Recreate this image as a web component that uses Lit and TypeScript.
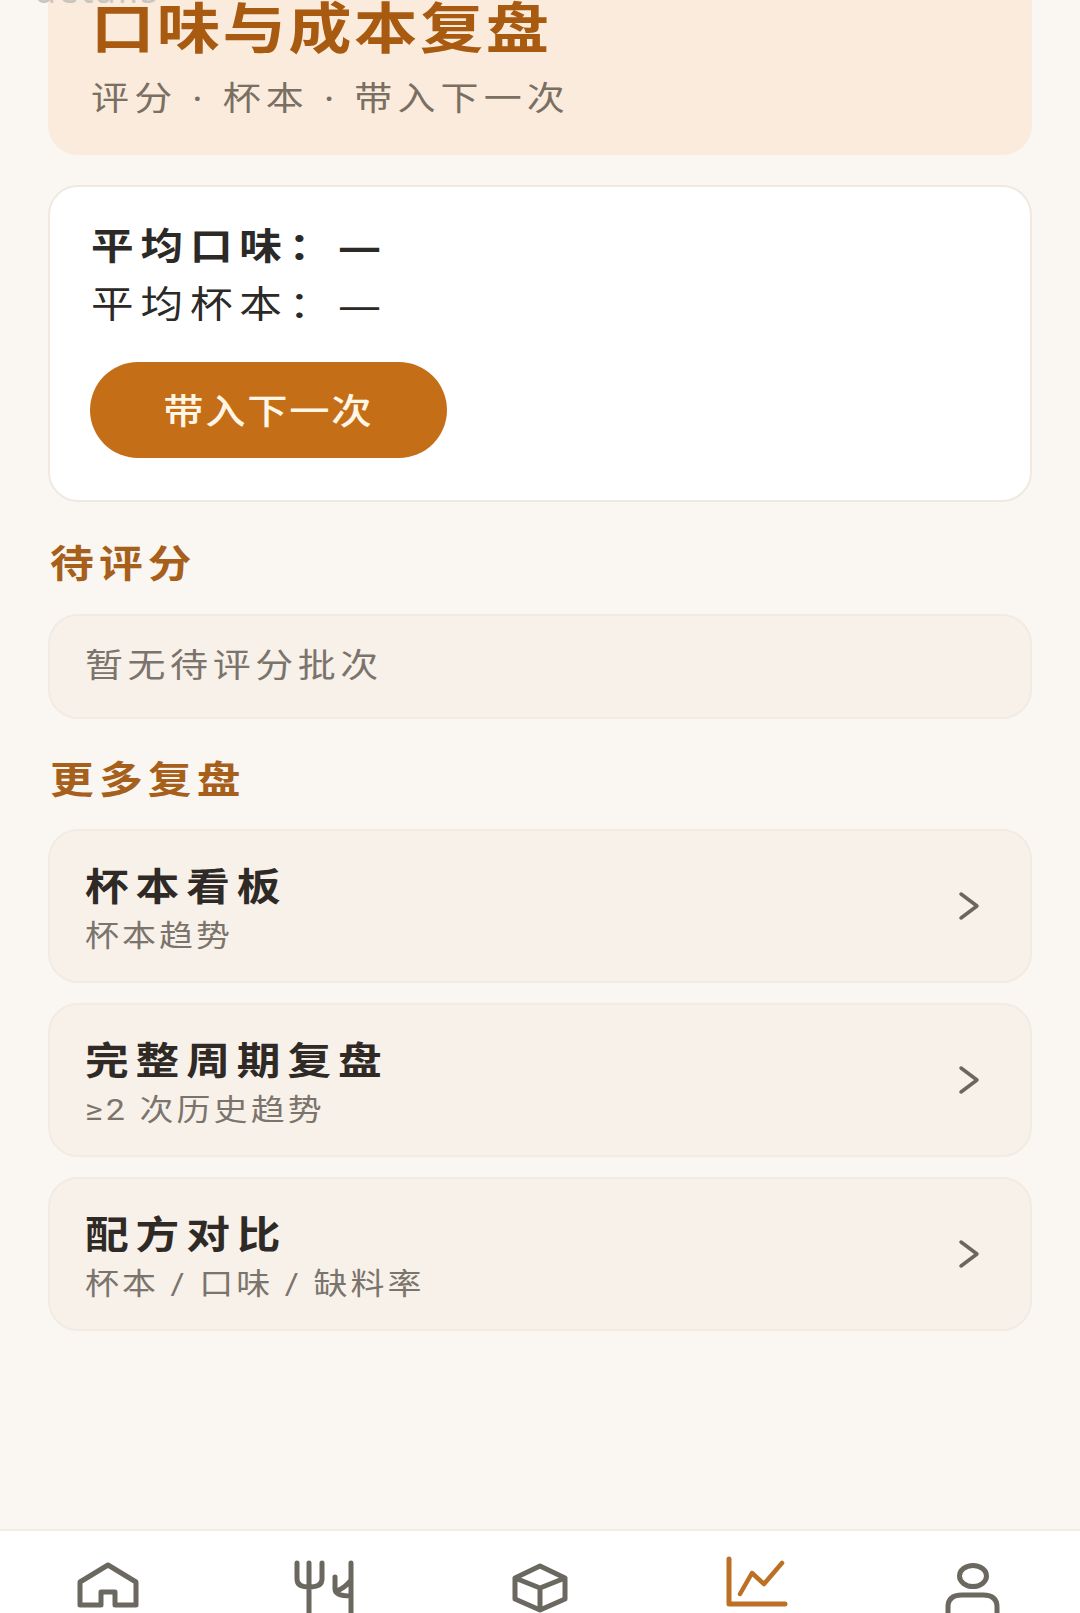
import { LitElement, html, css, svg } from "lit";
import { customElement } from "lit/decorators.js";

const rows = [
  ["杯本看板", "杯本趋势"],
  ["完整周期复盘", "≥2 次历史趋势"],
  ["配方对比", "杯本 / 口味 / 缺料率"],
];

const nav = [
  svg`<path d="M40 24 L68 41 V64 H47 V51 H33 V64 H12 V41 Z"/>`,
  svg`<path d="M13 22 V38 Q13 46 25 46 Q38 46 38 38 V22 M25 22 V74 M67 22 V74 M51 36 V48 Q51 55 67 55 M67 39 Q60 48 52 50"/>`,
  svg`<path d="M40 25 L65 37 V58 L40 69 L15 58 V37 Z M15 37 L40 47 L65 37 M40 47 V69"/>`,
  svg`<path d="M13 18 V63 H69"/><path d="M24 53 L36 32 L48 43 L66 22" stroke-width="4.5"/>`,
  svg`<ellipse cx="41" cy="35" rx="13.5" ry="10.5"/><path d="M16 78 V66 Q16 54 30 54 H51 Q65 54 65 66 V78"/>`,
];

@customElement("app-root")
export class AppRoot extends LitElement {
  static styles = css`
    :host {
      display: block;
      position: relative;
      width: 1080px;
      height: 1613px;
      overflow: hidden;
      background: #faf6f1;
      font-family: "Noto Sans", "Noto Sans CJK SC", sans-serif;
    }
    .page {
      height: 1613px;
      display: flex;
      flex-direction: column;
    }
    .scroll {
      flex: 1;
      min-height: 0;
      padding: 0 48px;
      display: flex;
      flex-direction: column;
      overflow: hidden;
    }
    .peek {
      position: absolute;
      left: 34px;
      top: -33px;
      font-size: 36px;
      line-height: 46px;
      letter-spacing: 2px;
      color: #c9c5bf;
    }
    .w {
      width: fit-content;
      transform: scaleX(1.15);
      transform-origin: 0 50%;
      white-space: pre;
    }
    .hero {
      flex: none;
      height: 215px;
      margin-top: -60px;
      box-sizing: border-box;
      background: #faebdc;
      border-radius: 30px;
      padding: 48px 43px 0;
    }
    .hero h1 {
      margin: 0;
      font-size: 55px;
      line-height: 78px;
      font-weight: 700;
      letter-spacing: 2.2px;
      color: #a75a10;
    }
    .hero p {
      margin: 7px 0 0;
      font-size: 33px;
      line-height: 50px;
      letter-spacing: 4.5px;
      color: #7a6f63;
    }
    .card {
      flex: none;
      margin-top: 30px;
      height: 317px;
      box-sizing: border-box;
      background: #fff;
      border: 2px solid #efe9e2;
      border-radius: 30px;
      padding: 30px 41px 0;
    }
    .stat {
      font-size: 37px;
      line-height: 58px;
      letter-spacing: 6px;
      color: #2c2a27;
    }
    .stat.bold {
      font-weight: 700;
    }
    .btn {
      margin: 29px 0 0 -1px;
      width: 357px;
      height: 96px;
      box-sizing: border-box;
      padding-bottom: 4px;
      border-radius: 48px;
      background: #c56e18;
      color: #fff6e6;
      font-size: 35px;
      font-weight: 500;
      display: flex;
      align-items: center;
      justify-content: center;
    }
    .btn span {
      letter-spacing: 1.5px;
      transform: scaleX(1.15);
    }
    h2 {
      margin: 33px 0 3px 2px;
      font-size: 38px;
      line-height: 54px;
      letter-spacing: 4.5px;
      font-weight: 700;
      color: #a75f1c;
    }
    .empty {
      margin-top: 22px;
      height: 105px;
      box-sizing: border-box;
      background: #f7f1ea;
      border: 2px solid #f1ebe3;
      border-radius: 30px;
      padding: 0 35px 8px;
      display: flex;
      align-items: center;
      font-size: 33px;
      letter-spacing: 4px;
      color: #7b746c;
    }
    .empty + h2 {
      margin-top: 32px;
    }
    .list {
      margin-top: 21px;
      display: flex;
      flex-direction: column;
      gap: 20px;
    }
    .row {
      height: 154px;
      box-sizing: border-box;
      background: #f7f1ea;
      border: 2px solid #f1ebe3;
      border-radius: 30px;
      padding: 4px 50px 0 35px;
      display: flex;
      align-items: center;
      justify-content: space-between;
    }
    .t {
      font-size: 38px;
      line-height: 52px;
      font-weight: 700;
      letter-spacing: 6px;
      color: #2f2a26;
    }
    .s {
      margin-top: 3px;
      font-family: "Roboto", "Noto Sans CJK SC", sans-serif;
      font-size: 29.5px;
      line-height: 44px;
      letter-spacing: 2.7px;
      color: #7b746c;
    }
    .chev {
      width: 22px;
      height: 30px;
      margin-top: -4px;
      color: #6c665f;
    }
    nav {
      flex: none;
      height: 84px;
      box-sizing: border-box;
      background: #fff;
      border-top: 2px solid #f2eee6;
      display: grid;
      grid-template-columns: repeat(5, 216px);
      overflow: hidden;
    }
    .tab {
      display: flex;
      justify-content: center;
      padding-top: 10px;
      color: #6b6860;
    }
    .tab.on {
      color: #bc7023;
    }
    .ic {
      width: 80px;
      height: 80px;
      flex: none;
    }
  `;

  render() {
    return html`<div class="page">
      <div class="scroll">
        <section class="hero">
          <h1 class="w">口味与成本复盘</h1>
          <p class="w">评分 · 杯本 · 带入下一次</p>
        </section>
        <section class="card">
          <div class="stat bold w">平均口味：—</div>
          <div class="stat w">平均杯本：—</div>
          <div class="btn"><span>带入下一次</span></div>
        </section>
        <h2 class="w">待评分</h2>
        <div class="empty"><span class="w">暂无待评分批次</span></div>
        <h2 class="w">更多复盘</h2>
        <div class="list">
          ${rows.map(
            ([t, s]) => html`<div class="row">
              <div>
                <div class="t w">${t}</div>
                <div class="s w">${s}</div>
              </div>
              <svg class="chev" viewBox="0 0 22 30" fill="none" stroke="currentColor" stroke-width="3.5" stroke-linecap="round" stroke-linejoin="round"><path d="M3 3 L19 15 L3 27" /></svg>
            </div>`
          )}
        </div>
      </div>
      <nav>
        ${nav.map(
          (b, i) => html`<div class="tab ${i === 3 ? "on" : ""}">
            <svg class="ic" viewBox="0 0 80 80" fill="none" stroke="currentColor" stroke-width="5" stroke-linecap="round" stroke-linejoin="round">${b}</svg>
          </div>`
        )}
      </nav>
      <div class="peek">details</div>
    </div>`;
  }
}
